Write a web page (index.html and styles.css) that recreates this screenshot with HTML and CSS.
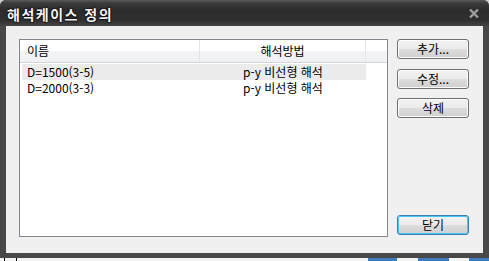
FILE: index.html
```html
<!DOCTYPE html>
<html lang="ko">
<head>
  <meta charset="UTF-8" />
  <title>해석케이스 정의</title>
  <link rel="stylesheet" href="styles.css">
</head>
<body>
  <div class="window">
    <div class="titlebar">
      <span class="title">해석케이스 정의</span>
      <svg class="closeX" width="10" height="9" viewBox="0 0 10 9">
        <path d="M1 0.5 L9 8.5 M9 0.5 L1 8.5" stroke="#9c9c9c" stroke-width="2.4" fill="none"/>
      </svg>
    </div>

    <div class="client">
      <!-- 목록 -->
      <div class="listview">
        <div class="lvHeader">
          <div class="colName">이름</div>
          <div class="colMethod">해석방법</div>
          <div class="colFill"></div>
        </div>
        <div class="lvBody">
          <div class="lvRow selected">
            <span class="colName">D=1500(3-5)</span>
            <span class="colMethod">p-y 비선형 해석</span>
          </div>
          <div class="lvRow">
            <span class="colName">D=2000(3-3)</span>
            <span class="colMethod">p-y 비선형 해석</span>
          </div>
        </div>
      </div>

      <!-- 버튼 -->
      <div class="buttons">
        <button class="btn">추가...</button>
        <button class="btn">수정...</button>
        <button class="btn">삭제</button>
        <button class="btn default">닫기</button>
      </div>
    </div>
  </div>

  <div class="taskbar">
    <span class="tick"></span>
    <span class="tick second"></span>
    <span class="seg white"></span>
    <span class="seg blue"></span>
    <span class="seg white"></span>
    <span class="seg blue"></span>
    <span class="seg white"></span>
    <span class="seg blue"></span>
  </div>
</body>
</html>
```

FILE: styles.css
```css
body {
  margin: 0;
  background: #cfcfcf;
  font-family: "Noto Sans CJK KR", "Liberation Sans", sans-serif;
  font-size: 12px;
  color: #000;
  width: 489px;
  height: 261px;
  overflow: hidden;
}

/* 창 틀 */
.window {
  background: #484848;
  border-radius: 6px 6px 0 0;
  height: 258px;
  display: flex;
  flex-direction: column;
}
.titlebar {
  height: 26px;
  flex: none;
  display: flex;
  align-items: center;
  justify-content: space-between;
  padding: 0 10px 0 7px;
  border-radius: 6px 6px 0 0;
  background: linear-gradient(#5a5a5a 0, #3c3c3c 3px, #2c2c2c 10px, #2f2f2f 20px, #444 26px);
}
.title {
  color: #f4f4f4;
  font-weight: bold;
  font-size: 14px;
  letter-spacing: 1.5px;
  line-height: 14px;
  margin-top: 1px;
  text-shadow: 0 0 2px #000, 0 0 2px #000;
}
.closeX {
  display: block;
}

.client {
  flex: 1;
  background: #f0f0f0;
  margin: 0 6px 5px 6px;
  padding: 13px 14px 16px 13px;
  display: flex;
}

/* 목록 */
.listview {
  width: 368px;
  border: 1px solid #828790;
  background: #fff;
}
.lvHeader {
  display: flex;
  height: 22px;
  border-bottom: 1px solid #d5d5d5;
  background: linear-gradient(#fff 0, #fff 50%, #f3f4f6 51%, #eef0f3 100%);
}
.lvHeader > div {
  line-height: 22px;
  border-right: 1px solid #e3e5e8;
  box-sizing: border-box;
}
.lvHeader .colName {
  width: 180px;
  padding-left: 7px;
}
.lvHeader .colMethod {
  width: 166px;
  text-align: center;
}
.lvHeader .colFill {
  flex: 1;
  border-right: none;
}
.lvBody {
  padding-top: 1px;
}
.lvRow {
  display: flex;
  width: 344px;
  height: 16px;
  line-height: 16px;
  margin-left: 2px;
}
.lvRow.selected {
  background: #ebebeb;
}
.lvRow .colName {
  width: 178px;
  padding-left: 5px;
  box-sizing: border-box;
}
.lvRow .colMethod {
  width: 166px;
  text-align: center;
}

/* 버튼 */
.buttons {
  margin-left: 9px;
  width: 72px;
  display: flex;
  flex-direction: column;
  gap: 10px;
}
.btn {
  height: 20px;
  width: 72px;
  padding: 0;
  font-family: inherit;
  font-size: 12px;
  line-height: 16px;
  color: #000;
  border: 1px solid #707070;
  border-radius: 3px;
  background: linear-gradient(#f2f2f2 0, #ebebeb 50%, #dddddd 51%, #cfcfcf 100%);
  box-shadow: inset 0 0 0 1px #fcfcfc;
}
.btn:nth-child(3) {
  margin-top: -1px;
}
.btn.default {
  margin-top: auto;
  margin-bottom: 2px;
  border-color: #3c7fb1;
  box-shadow: inset 0 0 0 1px #48c6f5;
}

/* 아래 작업표시줄 */
.taskbar {
  height: 3px;
  display: flex;
  background: #f4f4f4;
  position: relative;
}
.tick {
  position: absolute;
  left: 4px;
  top: 0;
  width: 1px;
  height: 3px;
  background: #000;
}
.tick.second {
  left: 16px;
}
.seg.white {
  background: #f4f4f4;
}
.seg:nth-of-type(3) {
  width: 368px;
}
.seg:nth-of-type(4) {
  width: 29px;
}
.seg:nth-of-type(5) {
  width: 21px;
}
.seg:nth-of-type(6) {
  width: 31px;
}
.seg:nth-of-type(7) {
  width: 20px;
}
.seg:nth-of-type(8) {
  flex: 1;
}
.seg.blue {
  background: #3d7cc0;
}
```
